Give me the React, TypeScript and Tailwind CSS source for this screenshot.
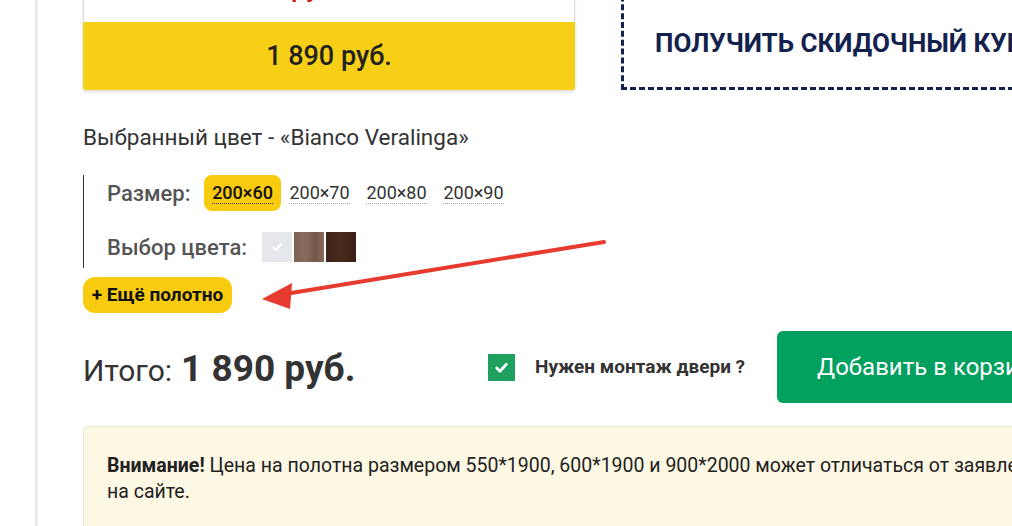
import React from "react";

const sizes = ["200×60", "200×70", "200×80", "200×90"];

function Check({ className }: { className?: string }) {
  return (
    <svg viewBox="0 0 16 16" className={className} fill="none">
      <path d="M3.5 8.5l3 3 6-6.5" stroke="currentColor" strokeWidth="2.6" strokeLinecap="round" strokeLinejoin="round" />
    </svg>
  );
}

function Arrow() {
  return (
    <svg className="pointer-events-none absolute left-0 top-0" width="1012" height="526">
      <line x1="604" y1="242" x2="285" y2="294" stroke="#e63b2e" strokeWidth="4" strokeLinecap="round" />
      <polygon points="262,299 292,283 290,309" fill="#e63b2e" />
    </svg>
  );
}

export default function App() {
  return (
    <div
      className="relative flex h-[526px] w-[1012px] overflow-hidden bg-white text-[#333]"
      style={{ fontFamily: "Roboto, 'Noto Sans', sans-serif" }}
    >
      <div className="w-[35px] shrink-0" />
      <div className="flex-1 border-l-[3px] border-[#e9e9e9] pl-[45px]">
        {/* Top row: price card + coupon */}
        <div className="flex items-start">
          <div className="mt-[-40px] w-[492px] shrink-0 shadow-[0_2px_3px_rgba(0,0,0,0.12)]">
            <div className="h-[62px] overflow-hidden border border-b-0 border-[#dcdcdc] pl-[207px] pt-[13px] text-[27px] font-medium leading-[27px] text-[#d7141d]">
              руб.
            </div>
            <div className="flex h-[68px] items-center justify-center rounded-b-[2px] bg-[#f8cf17] text-[27px] font-medium text-[#222]">
              1 890 руб.
            </div>
          </div>
          <div className="ml-[46px] mt-[-40px] flex h-[130px] w-[600px] shrink-0 items-center border-[3px] border-dashed border-[#13224d] pl-[31px] pt-[36px]">
            <span className="whitespace-nowrap text-[26px] font-bold text-[#13224d]">ПОЛУЧИТЬ СКИДОЧНЫЙ КУПОН</span>
          </div>
        </div>

        <p className="mt-[33px] text-[22.5px] leading-[28px] text-[#333]">Выбранный цвет - «Bianco Veralinga»</p>

        {/* Options */}
        <div className="mt-[24px] border-l border-[#333] pb-[6px] pl-[23px]">
          <div className="flex h-[36px] items-center">
            <span className="w-[97px] whitespace-nowrap text-[22px] font-medium text-[#555]">Размер:</span>
            <div className="flex">
              {sizes.map((s, i) => (
                <div
                  key={s}
                  className={
                    i === 0
                      ? "flex h-[36px] w-[77px] items-center justify-center rounded-lg bg-[#f8cb0e]"
                      : "flex h-[36px] w-[77px] items-center justify-center"
                  }
                >
                  <span
                    className={
                      i === 0
                        ? "border-b border-dotted border-[#333] text-[18px] font-medium leading-[21px] text-[#111]"
                        : "border-b border-dotted border-[#999] text-[18px] leading-[21px] text-[#333]"
                    }
                  >
                    {s}
                  </span>
                </div>
              ))}
            </div>
          </div>
          <div className="mt-[21px] flex h-[30px] items-center">
            <span className="w-[155px] whitespace-nowrap text-[22px] font-medium text-[#555]">Выбор цвета:</span>
            <div className="flex gap-[2px]">
              <div className="flex h-[30px] w-[30px] items-center justify-center bg-[#e6e7eb]">
                <Check className="h-[14px] w-[14px] text-white" />
              </div>
              <div className="h-[30px] w-[30px] bg-[linear-gradient(90deg,#7d6254,#8a6c5d_40%,#735848_70%,#86695a)]" />
              <div className="h-[30px] w-[30px] bg-[linear-gradient(90deg,#3e2218,#4a2a1e_50%,#3a1f16)]" />
            </div>
          </div>
        </div>

        <button className="mt-[9px] flex h-[36px] w-[149px] items-center justify-center whitespace-nowrap rounded-[12px] bg-[#f8cb0e] text-[19px] font-bold text-[#111]">
          + Ещё полотно
        </button>

        {/* Total row */}
        <div className="mt-[18px] flex items-center">
          <div className="flex w-[405px] items-baseline pt-[4px]">
            <span className="text-[30px] text-[#333]">Итого:</span>
            <span className="ml-[9px] text-[37px] font-bold text-[#333]">1 890 руб.</span>
          </div>
          <div className="flex h-[27px] w-[27px] items-center justify-center bg-[#20a05e]">
            <Check className="h-[17px] w-[17px] text-white" />
          </div>
          <span className="ml-[20px] whitespace-nowrap text-[19px] font-bold text-[#333]">Нужен монтаж двери ?</span>
          <button className="ml-[32px] flex h-[72px] w-[300px] shrink-0 items-center rounded-md bg-[#02a05f] pl-[40px] text-[24px] text-white">
            <span className="whitespace-nowrap">Добавить в корзину</span>
          </button>
        </div>

        {/* Notice */}
        <div className="mt-[23px] w-[1100px] rounded border border-[#f3eac8] bg-[#fdf8e4] px-[23px] pb-[26px] pt-[26px] text-[19.5px] leading-[26px] text-[#222]">
          <p className="whitespace-nowrap">
            <b>Внимание!</b> Цена на полотна размером 550*1900, 600*1900 и 900*2000 может отличаться от заявленной
            <br />
            на сайте.
          </p>
        </div>
      </div>
      <Arrow />
    </div>
  );
}
